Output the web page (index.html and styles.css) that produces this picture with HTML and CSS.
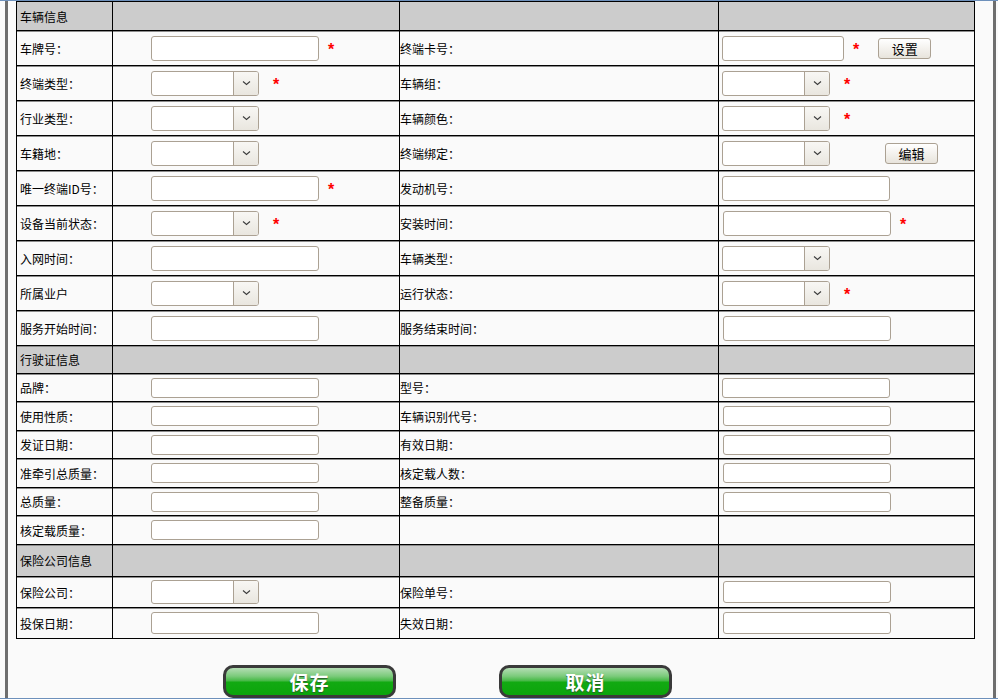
FILE: index.html
```html
<!DOCTYPE html>
<html lang="zh-CN">
<head>
<meta charset="utf-8">
<title>车辆信息</title>
<link rel="stylesheet" href="styles.css">
</head>
<body>
<div class="page">
  <div class="panel">
    <table class="form">
      <colgroup><col class="w1"><col class="w2"><col class="w3"><col class="w4"></colgroup>
      <tr class="sec h29"><td class="lbl">车辆信息</td><td></td><td></td><td></td></tr>
      <tr class="h35">
        <td class="lbl">车牌号：</td>
        <td class="c2"><div class="f"><span class="inp"></span><span class="star">*</span></div></td>
        <td class="lbl3">终端卡号：</td>
        <td class="c4"><div class="f"><span class="inp short"></span><span class="star">*</span><span class="btn set">设置</span></div></td>
      </tr>
      <tr class="h35">
        <td class="lbl">终端类型：</td>
        <td class="c2"><div class="f"><span class="sel"><span class="box"></span><span class="arr"><svg width="9" height="6" viewBox="0 0 9 6"><path d="M1 1.5 L4.5 4.5 L8 1.5" fill="none" stroke="#3c3c3c" stroke-width="1.1"/></svg></span></span><span class="star ss">*</span></div></td>
        <td class="lbl3">车辆组：</td>
        <td class="c4"><div class="f"><span class="sel"><span class="box"></span><span class="arr"><svg width="9" height="6" viewBox="0 0 9 6"><path d="M1 1.5 L4.5 4.5 L8 1.5" fill="none" stroke="#3c3c3c" stroke-width="1.1"/></svg></span></span><span class="star ss">*</span></div></td>
      </tr>
      <tr class="h35">
        <td class="lbl">行业类型：</td>
        <td class="c2"><div class="f"><span class="sel"><span class="box"></span><span class="arr"><svg width="9" height="6" viewBox="0 0 9 6"><path d="M1 1.5 L4.5 4.5 L8 1.5" fill="none" stroke="#3c3c3c" stroke-width="1.1"/></svg></span></span></div></td>
        <td class="lbl3">车辆颜色：</td>
        <td class="c4"><div class="f"><span class="sel"><span class="box"></span><span class="arr"><svg width="9" height="6" viewBox="0 0 9 6"><path d="M1 1.5 L4.5 4.5 L8 1.5" fill="none" stroke="#3c3c3c" stroke-width="1.1"/></svg></span></span><span class="star ss">*</span></div></td>
      </tr>
      <tr class="h35">
        <td class="lbl">车籍地：</td>
        <td class="c2"><div class="f"><span class="sel"><span class="box"></span><span class="arr"><svg width="9" height="6" viewBox="0 0 9 6"><path d="M1 1.5 L4.5 4.5 L8 1.5" fill="none" stroke="#3c3c3c" stroke-width="1.1"/></svg></span></span></div></td>
        <td class="lbl3">终端绑定：</td>
        <td class="c4"><div class="f"><span class="sel"><span class="box"></span><span class="arr"><svg width="9" height="6" viewBox="0 0 9 6"><path d="M1 1.5 L4.5 4.5 L8 1.5" fill="none" stroke="#3c3c3c" stroke-width="1.1"/></svg></span></span><span class="btn edit">编辑</span></div></td>
      </tr>
      <tr class="h35">
        <td class="lbl">唯一终端ID号：</td>
        <td class="c2"><div class="f"><span class="inp"></span><span class="star">*</span></div></td>
        <td class="lbl3">发动机号：</td>
        <td class="c4"><div class="f"><span class="inp"></span></div></td>
      </tr>
      <tr class="h35">
        <td class="lbl">设备当前状态：</td>
        <td class="c2"><div class="f"><span class="sel"><span class="box"></span><span class="arr"><svg width="9" height="6" viewBox="0 0 9 6"><path d="M1 1.5 L4.5 4.5 L8 1.5" fill="none" stroke="#3c3c3c" stroke-width="1.1"/></svg></span></span><span class="star ss">*</span></div></td>
        <td class="lbl3">安装时间：</td>
        <td class="c4"><div class="f"><span class="inp off"></span><span class="star">*</span></div></td>
      </tr>
      <tr class="h35">
        <td class="lbl">入网时间：</td>
        <td class="c2"><div class="f"><span class="inp"></span></div></td>
        <td class="lbl3">车辆类型：</td>
        <td class="c4"><div class="f"><span class="sel"><span class="box"></span><span class="arr"><svg width="9" height="6" viewBox="0 0 9 6"><path d="M1 1.5 L4.5 4.5 L8 1.5" fill="none" stroke="#3c3c3c" stroke-width="1.1"/></svg></span></span></div></td>
      </tr>
      <tr class="h35">
        <td class="lbl">所属业户</td>
        <td class="c2"><div class="f"><span class="sel"><span class="box"></span><span class="arr"><svg width="9" height="6" viewBox="0 0 9 6"><path d="M1 1.5 L4.5 4.5 L8 1.5" fill="none" stroke="#3c3c3c" stroke-width="1.1"/></svg></span></span></div></td>
        <td class="lbl3">运行状态：</td>
        <td class="c4"><div class="f"><span class="sel"><span class="box"></span><span class="arr"><svg width="9" height="6" viewBox="0 0 9 6"><path d="M1 1.5 L4.5 4.5 L8 1.5" fill="none" stroke="#3c3c3c" stroke-width="1.1"/></svg></span></span><span class="star ss">*</span></div></td>
      </tr>
      <tr class="h35">
        <td class="lbl">服务开始时间：</td>
        <td class="c2"><div class="f"><span class="inp"></span></div></td>
        <td class="lbl3">服务结束时间：</td>
        <td class="c4"><div class="f"><span class="inp off"></span></div></td>
      </tr>

      <tr class="sec h28"><td class="lbl">行驶证信息</td><td></td><td></td><td></td></tr>
      <tr class="h28">
        <td class="lbl">品牌：</td>
        <td class="c2"><div class="f"><span class="inp sm"></span></div></td>
        <td class="lbl3">型号：</td>
        <td class="c4"><div class="f"><span class="inp sm"></span></div></td>
      </tr>
      <tr class="h29">
        <td class="lbl">使用性质：</td>
        <td class="c2"><div class="f"><span class="inp sm"></span></div></td>
        <td class="lbl3">车辆识别代号：</td>
        <td class="c4"><div class="f"><span class="inp sm off"></span></div></td>
      </tr>
      <tr class="h28">
        <td class="lbl">发证日期：</td>
        <td class="c2"><div class="f"><span class="inp sm"></span></div></td>
        <td class="lbl3">有效日期：</td>
        <td class="c4"><div class="f"><span class="inp sm off"></span></div></td>
      </tr>
      <tr class="h29">
        <td class="lbl">准牵引总质量：</td>
        <td class="c2"><div class="f"><span class="inp sm"></span></div></td>
        <td class="lbl3">核定载人数：</td>
        <td class="c4"><div class="f"><span class="inp sm off"></span></div></td>
      </tr>
      <tr class="h28">
        <td class="lbl">总质量：</td>
        <td class="c2"><div class="f"><span class="inp sm"></span></div></td>
        <td class="lbl3">整备质量：</td>
        <td class="c4"><div class="f"><span class="inp sm off"></span></div></td>
      </tr>
      <tr class="h29">
        <td class="lbl">核定载质量：</td>
        <td class="c2"><div class="f"><span class="inp sm"></span></div></td>
        <td></td>
        <td></td>
      </tr>

      <tr class="sec h32"><td class="lbl">保险公司信息</td><td></td><td></td><td></td></tr>
      <tr class="h31">
        <td class="lbl">保险公司：</td>
        <td class="c2"><div class="f"><span class="sel md"><span class="box"></span><span class="arr"><svg width="9" height="6" viewBox="0 0 9 6"><path d="M1 1.5 L4.5 4.5 L8 1.5" fill="none" stroke="#3c3c3c" stroke-width="1.1"/></svg></span></span></div></td>
        <td class="lbl3">保险单号：</td>
        <td class="c4"><div class="f"><span class="inp mid off"></span></div></td>
      </tr>
      <tr class="h31">
        <td class="lbl">投保日期：</td>
        <td class="c2"><div class="f"><span class="inp mid"></span></div></td>
        <td class="lbl3">失效日期：</td>
        <td class="c4"><div class="f"><span class="inp mid off"></span></div></td>
      </tr>
    </table>

    <div class="actions">
      <span class="gbtn">保存</span>
      <span class="gbtn">取消</span>
    </div>
  </div>
</div>
</body>
</html>
```
FILE: styles.css
```css
* { box-sizing: border-box; }
html, body { margin: 0; padding: 0; }
body {
  font-family: "Noto Sans CJK SC", "Liberation Sans", sans-serif;
  font-size: 12px;
  color: #000;
  background: #fafafa;
}
.page {
  height: 699px;
  border-top: 1px solid #6d90bb;
  border-bottom: 1px solid #6d90bb;
  overflow: hidden;
}
.panel {
  margin-left: 5px;
  width: 991px;
  height: 100%;
  border-left: 3px solid #6e6e6e;
  border-right: 3px solid #6e6e6e;
  padding-left: 8px;
}
.form {
  border-collapse: separate;
  border-spacing: 0;
  table-layout: fixed;
  width: 959px;
  border-left: 1px solid #000;
  border-top: 1px solid #000;
}
.w1 { width: 96px; }
.w2 { width: 287px; }
.w3 { width: 319px; }
.w4 { width: 256px; }
.form td {
  border-right: 1px solid #000;
  border-bottom: 1px solid #000;
  padding: 0;
  vertical-align: middle;
  white-space: nowrap;
  box-shadow: inset 0 1px 0 #8c8c8c;
}
.form tr:first-child td { box-shadow: none; }
.sec td { background: #cccccc; }
.h28 { height: 28px; }
.h29 { height: 29px; }
.h31 { height: 31px; }
.h32 { height: 32px; }
.h35 { height: 35px; }
.lbl { padding-left: 3px !important; }
.lbl3 { padding-left: 0; }
.c2 { padding-left: 38px !important; }
.c4 { padding-left: 3px !important; }
.f { display: flex; align-items: center; }
.inp {
  display: block;
  width: 168px;
  height: 25px;
  border: 1px solid #aba193;
  border-radius: 3px;
  background: #fff;
}
.inp.short { width: 122px; }
.inp.sm { height: 20px; }
.inp.mid { height: 22px; }
.inp.off { margin-left: 1px; }
.sel {
  display: flex;
  width: 108px;
  height: 25px;
  border: 1px solid #aba193;
  border-radius: 3px;
  background: #fff;
  overflow: hidden;
}
.sel.md { height: 24px; }
.sel .box { flex: 1; }
.sel .arr {
  width: 25px;
  border-left: 1px solid #aba193;
  background: linear-gradient(#f8f7f4, #e9e6df);
  display: flex;
  align-items: center;
  justify-content: center;
}
.star {
  color: #f00;
  font-family: "Liberation Sans", sans-serif;
  font-weight: bold;
  font-size: 16px;
  line-height: 16px;
  margin-left: 9px;
  margin-top: 4px;
}
.star.ss { margin-left: 14px; }
.btn {
  display: flex;
  align-items: center;
  justify-content: center;
  width: 53px;
  height: 21px;
  border: 1px solid #aba193;
  border-radius: 3px;
  background: linear-gradient(#ffffff, #e8e4dc);
  font-size: 13px;
}
.btn.set { margin-left: 19px; }
.btn.edit { margin-left: 55px; }
.actions {
  display: flex;
  gap: 103px;
  margin-top: 26px;
  padding-left: 207px;
}
.gbtn {
  display: flex;
  align-items: center;
  justify-content: center;
  width: 173px;
  height: 33px;
  border: 3px solid #3a3a3a;
  border-radius: 10px;
  background: linear-gradient(#b4ddb4 0%, #7ccb7c 30%, #44b844 48%, #12aa12 52%, #0ca40c 100%);
  color: #fff;
  font-size: 19px;
  font-weight: bold;
  letter-spacing: 1px;
  text-shadow: 0 1px 1px #2a5a2a;
}
```
